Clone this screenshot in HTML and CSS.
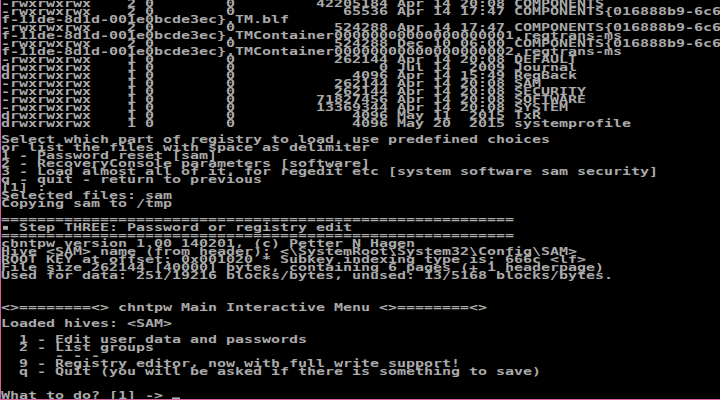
FILE: index.html
```html
<!DOCTYPE html>
<html>
<head>
<meta charset="utf-8">
<link rel="stylesheet" href="styles.css">
</head>
<body>
<div class="screen">
<pre class="term">-rwxrwxrwx    2 0        0         42205184 Apr 14 20:08 COMPONENTS
-rwxrwxrwx    2 0        0            65536 Apr 14 17:47 COMPONENTS{016888b9-6c6
f-11de-8d1d-001e0bcde3ec}.TM.blf
-rwxrwxrwx    2 0        0           524288 Apr 14 17:47 COMPONENTS{016888b9-6c6
f-11de-8d1d-001e0bcde3ec}.TMContainer00000000000000000001.regtrans-ms
-rwxrwxrwx    2 0        0           524288 Dec 10 06:00 COMPONENTS{016888b9-6c6
f-11de-8d1d-001e0bcde3ec}.TMContainer00000000000000000002.regtrans-ms
-rwxrwxrwx    1 0        0           262144 Apr 14 20:08 DEFAULT
drwxrwxrwx    1 0        0                0 Jul 14  2009 Journal
drwxrwxrwx    1 0        0             4096 Apr 14 15:49 RegBack
-rwxrwxrwx    1 0        0           262144 Apr 14 20:08 SAM
-rwxrwxrwx    1 0        0           262144 Apr 14 20:08 SECURITY
-rwxrwxrwx    1 0        0         71827456 Apr 14 20:08 SOFTWARE
-rwxrwxrwx    1 0        0         13369344 Apr 14 20:08 SYSTEM
drwxrwxrwx    1 0        0             4096 May 11  2015 TxR
drwxrwxrwx    1 0        0             4096 May 20  2015 systemprofile

Select which part of registry to load, use predefined choices
or list the files with space as delimiter
1 - Password reset [sam]
2 - RecoveryConsole parameters [software]
3 - Load almost all of it, for regedit etc [system software sam security]
q - quit - return to previous
[1] : 
Selected files: sam
Copying sam to /tmp

=========================================================
<span class="bullet"></span> Step THREE: Password or registry edit
=========================================================
chntpw version 1.00 140201, (c) Petter N Hagen
Hive &lt;SAM&gt; name (from header): &lt;\SystemRoot\System32\Config\SAM&gt;
ROOT KEY at offset: 0x001020 * Subkey indexing type is: 666c &lt;lf&gt;
File size 262144 [40000] bytes, containing 6 pages (+ 1 headerpage)
Used for data: 251/19216 blocks/bytes, unused: 13/5168 blocks/bytes.



&lt;&gt;========&lt;&gt; chntpw Main Interactive Menu &lt;&gt;========&lt;&gt;

Loaded hives: &lt;SAM&gt;

  1 - Edit user data and passwords
  2 - List groups
      - - -
  9 - Registry editor, now with full write support!
  q - Quit (you will be asked if there is something to save)


What to do? [1] -&gt; <span class="cursor"></span></pre>
</div>
</body>
</html>
```
FILE: styles.css
```css
html, body {
  margin: 0;
  padding: 0;
  background: #000;
}

.screen {
  width: 720px;
  height: 400px;
  box-sizing: border-box;
  overflow: hidden;
  background: #000;
  border-left: 1px solid #d8609a;
  border-bottom: 1px solid #d8609a;
}

.term {
  margin: 0;
  padding: 0;
  width: 720px;
  font-family: "DejaVu Sans Mono", monospace;
  font-weight: bold;
  font-size: 15px;
  letter-spacing: -0.03px;
  line-height: 12.5px;
  color: #aaaaaa;
  white-space: pre;
  transform: scaleY(0.64);
  transform-origin: 0 0;
}

.bullet {
  display: inline-block;
  width: 5px;
  height: 6px;
  margin: 0 1.97px 0 2px;
  background: #aaaaaa;
  vertical-align: 2px;
}

.cursor {
  display: inline-block;
  width: 8px;
  height: 3px;
  background: #b4b4b4;
  vertical-align: baseline;
}
```
